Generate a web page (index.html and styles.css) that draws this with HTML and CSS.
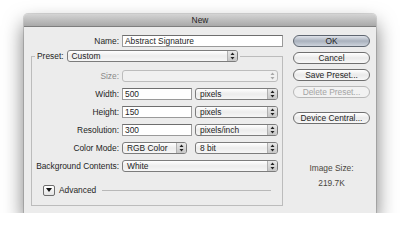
FILE: index.html
```html
<!DOCTYPE html>
<html>
<head>
    <meta charset="utf-8">
    <title>New</title>
    <link rel="stylesheet" href="styles.css">
</head>
<body>
    <div class="window">
        <div class="titlebar">New</div>
        <div class="content">
            <div class="main">
                <div class="row name-row">
                    <span class="label">Name:</span>
                    <div class="textfield wide">Abstract Signature</div>
                </div>

                <fieldset class="group">
                    <legend>
                        <span class="label">Preset:</span>
                        <div class="popup preset">Custom<span class="arrows"><svg width="5" height="8" viewBox="0 0 5 8"><path d="M2.5 0.5 L4.5 3 L0.5 3 Z M2.5 7.5 L4.5 5 L0.5 5 Z"/></svg></span></div>
                    </legend>

                    <div class="row">
                        <span class="label disabled">Size:</span>
                        <div class="popup full off"><span class="arrows"><svg width="5" height="8" viewBox="0 0 5 8"><path d="M2.5 0.5 L4.5 3 L0.5 3 Z M2.5 7.5 L4.5 5 L0.5 5 Z"/></svg></span></div>
                    </div>
                    <div class="row">
                        <span class="label">Width:</span>
                        <div class="textfield">500</div>
                        <div class="popup unit">pixels<span class="arrows"><svg width="5" height="8" viewBox="0 0 5 8"><path d="M2.5 0.5 L4.5 3 L0.5 3 Z M2.5 7.5 L4.5 5 L0.5 5 Z"/></svg></span></div>
                    </div>
                    <div class="row">
                        <span class="label">Height:</span>
                        <div class="textfield">150</div>
                        <div class="popup unit">pixels<span class="arrows"><svg width="5" height="8" viewBox="0 0 5 8"><path d="M2.5 0.5 L4.5 3 L0.5 3 Z M2.5 7.5 L4.5 5 L0.5 5 Z"/></svg></span></div>
                    </div>
                    <div class="row">
                        <span class="label">Resolution:</span>
                        <div class="textfield">300</div>
                        <div class="popup unit">pixels/inch<span class="arrows"><svg width="5" height="8" viewBox="0 0 5 8"><path d="M2.5 0.5 L4.5 3 L0.5 3 Z M2.5 7.5 L4.5 5 L0.5 5 Z"/></svg></span></div>
                    </div>
                    <div class="row">
                        <span class="label">Color Mode:</span>
                        <div class="popup mode">RGB Color<span class="arrows"><svg width="5" height="8" viewBox="0 0 5 8"><path d="M2.5 0.5 L4.5 3 L0.5 3 Z M2.5 7.5 L4.5 5 L0.5 5 Z"/></svg></span></div>
                        <div class="popup unit">8 bit<span class="arrows"><svg width="5" height="8" viewBox="0 0 5 8"><path d="M2.5 0.5 L4.5 3 L0.5 3 Z M2.5 7.5 L4.5 5 L0.5 5 Z"/></svg></span></div>
                    </div>
                    <div class="row">
                        <span class="label">Background Contents:</span>
                        <div class="popup full">White<span class="arrows"><svg width="5" height="8" viewBox="0 0 5 8"><path d="M2.5 0.5 L4.5 3 L0.5 3 Z M2.5 7.5 L4.5 5 L0.5 5 Z"/></svg></span></div>
                    </div>

                    <div class="advanced">
                        <span class="disclosure"><svg width="6" height="4" viewBox="0 0 6 4"><path d="M0 0 L6 0 L3 4 Z"/></svg></span>
                        <span class="adv-label">Advanced</span>
                        <span class="rule"></span>
                    </div>
                </fieldset>
            </div>

            <div class="side">
                <div class="button default">OK</div>
                <div class="button">Cancel</div>
                <div class="button">Save Preset...</div>
                <div class="button disabled">Delete Preset...</div>
                <div class="button device">Device Central...</div>
                <div class="image-size">Image Size:</div>
                <div class="image-value">219.7K</div>
            </div>
        </div>
    </div>
</body>
</html>
```

FILE: styles.css
```css
body {
    margin: 0;
    background: #ffffff;
    font-family: 'Liberation Sans', Arial, sans-serif;
    font-size: 8.4px;
    color: #1e1e1e;
}

.window {
    margin: 14px 0 0 24px;
    width: 352px;
    background: #ececec;
    border-radius: 4px 4px 0 0;
    box-shadow: 0 10px 20px rgba(0,0,0,0.55), 0 0 0 1px rgba(0,0,0,0.14);
}

.titlebar {
    height: 12px;
    line-height: 13px;
    text-align: center;
    background: linear-gradient(#d4d4d4, #a9a9a9);
    border-bottom: 1px solid #7e7e7e;
    border-radius: 4px 4px 0 0;
}

.content {
    display: flex;
    gap: 10px;
    padding: 8px 6px 7px 7px;
}

.main {
    width: 252px;
}

.row {
    display: flex;
    align-items: center;
    height: 12px;
}

.label {
    width: 87px;
    text-align: right;
    margin-right: 3px;
    white-space: nowrap;
}

.name-row .label {
    width: 88px;
}

.label.disabled {
    color: #8a8a8a;
}

.textfield {
    box-sizing: border-box;
    width: 70px;
    height: 12px;
    line-height: 10px;
    padding-left: 2px;
    background: #ffffff;
    border: 1px solid #9a9a9a;
    border-top-color: #6e6e6e;
}

.textfield.wide {
    width: 161px;
}

.popup {
    box-sizing: border-box;
    display: flex;
    align-items: center;
    height: 12px;
    padding-left: 4px;
    border: 1px solid #7c7c7c;
    border-radius: 3px;
    background: linear-gradient(#ffffff, #ececec 50%, #f6f6f6);
}

.popup .arrows {
    margin-left: auto;
    width: 9px;
    height: 10px;
    display: flex;
    align-items: center;
    justify-content: center;
    border-left: 1px solid #b0b0b0;
    border-radius: 0 2px 2px 0;
    background: linear-gradient(#e8e8e8, #c6c6c6);
}

.popup svg path {
    fill: #222;
}

.popup.full {
    width: 156px;
}

.popup.unit {
    width: 83px;
    margin-left: 3px;
}

.popup.mode {
    width: 65px;
    margin-right: 5px;
}

.popup.off {
    border-color: #bcbcbc;
    background: #f0f0f0;
}

.popup.off .arrows {
    background: none;
    border-left: none;
}

.popup.off svg path {
    fill: #a8a8a8;
}

.group {
    margin: 3px 0 0 0;
    padding: 8px 0 9px 0;
    border: 1px solid #bcbcbc;
    display: flex;
    flex-direction: column;
    gap: 6px;
    min-width: 0;
}

.group legend {
    display: flex;
    align-items: center;
    margin-left: 3px;
    padding: 0 2px 0 2px;
    height: 12px;
}

.group legend .label {
    width: auto;
    margin-right: 3px;
}

.popup.preset {
    width: 171px;
}

.advanced {
    display: flex;
    align-items: center;
    height: 12px;
    margin: 6px 11px 0 11px;
}

.disclosure {
    box-sizing: border-box;
    width: 12px;
    height: 11px;
    display: flex;
    align-items: center;
    justify-content: center;
    border: 1px solid #6e6e6e;
    border-radius: 2px;
    background: linear-gradient(#ffffff, #e4e4e4);
}

.disclosure svg path {
    fill: #111;
}

.adv-label {
    margin-left: 4px;
}

.rule {
    flex: 1;
    height: 1px;
    margin-left: 6px;
    background: #b8b8b8;
}

.side {
    width: 77px;
    display: flex;
    flex-direction: column;
    gap: 5px;
}

.button {
    box-sizing: border-box;
    height: 12px;
    line-height: 10px;
    text-align: center;
    border: 1px solid #6f6f6f;
    border-radius: 6px;
    background: linear-gradient(#ffffff, #eaeaea 50%, #f8f8f8);
}

.button.default {
    background: linear-gradient(#dfe3ea, #a9b1bd 50%, #cdd3dc);
    border-color: #5f6670;
}

.button.disabled {
    color: #a4a4a4;
    border-color: #b8b8b8;
    background: #f2f2f2;
}

.button.device {
    margin-top: 9px;
}

.image-size,
.image-value {
    text-align: center;
    line-height: 10px;
    color: #4a463c;
}

.image-size {
    margin-top: 34px;
}
```
